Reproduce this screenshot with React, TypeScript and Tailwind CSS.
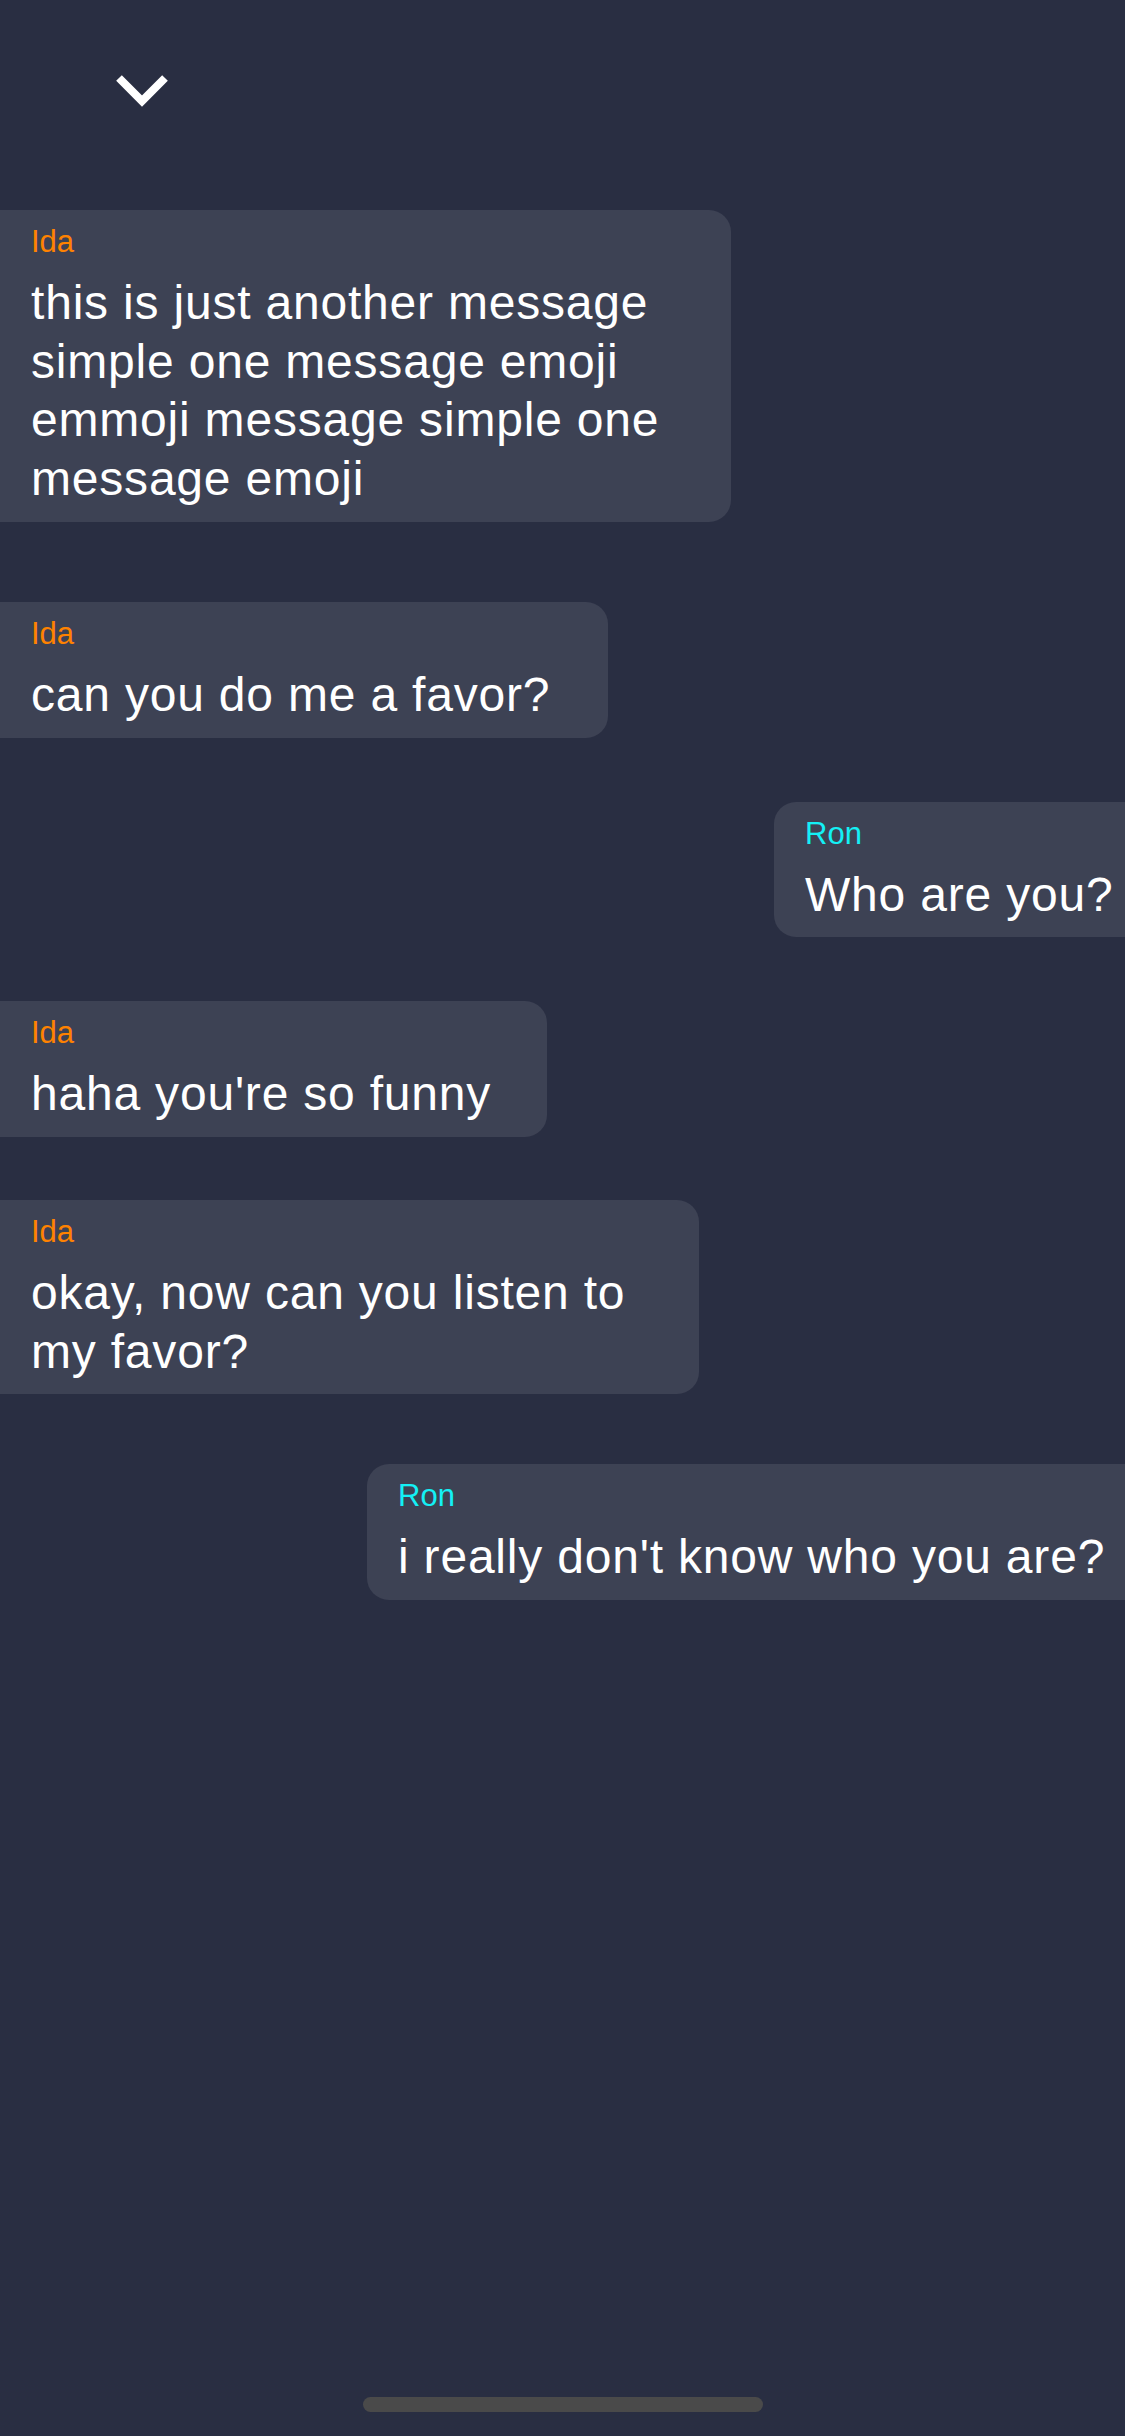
import type { ReactNode } from "react";

type Msg = {
  id: number;
  from: "Ida" | "Ron";
  text: string;
  // bubble width and top gap, read off the reference
  width: string;
  gap: string;
};

const messages: Msg[] = [
  {
    id: 1,
    from: "Ida",
    text: "this is just another message simple one message emoji emmoji message simple one message emoji",
    width: "w-[731px]",
    gap: "mt-[104px]",
  },
  { id: 2, from: "Ida", text: "can you do me a favor?", width: "w-[608px]", gap: "mt-[80px]" },
  { id: 3, from: "Ron", text: "Who are you?", width: "w-[351px]", gap: "mt-[64px]" },
  { id: 4, from: "Ida", text: "haha you're so funny", width: "w-[547px]", gap: "mt-[64px]" },
  { id: 5, from: "Ida", text: "okay, now can you listen to my favor?", width: "w-[699px]", gap: "mt-[63px]" },
  { id: 6, from: "Ron", text: "i really don't know who you are?", width: "w-[758px]", gap: "mt-[70px]" },
];

function Bubble({ msg }: { msg: Msg }) {
  const mine = msg.from === "Ron";
  return (
    <div className={`flex ${mine ? "justify-end" : "justify-start"} ${msg.gap}`}>
      <div
        className={`${msg.width} shrink-0 bg-[#3d4254] pt-[13px] pb-[13px] pl-[31px] ${
          mine ? "rounded-l-[22px] pr-0 whitespace-nowrap" : "rounded-r-[22px] pr-[55px]"
        }`}
      >
        <div
          className={`text-[31px] leading-[37px] ${mine ? "text-[#14f0f5]" : "text-[#ff8200]"}`}
        >
          {msg.from}
        </div>
        <p className="mt-[14px] text-[48px] leading-[58.7px] tracking-[0.8px] text-white">
          {msg.text}
        </p>
      </div>
    </div>
  );
}

function Screen({ children }: { children: ReactNode }) {
  return (
    <div
      className="relative flex h-[2436px] w-full flex-col overflow-hidden bg-[#292e42]"
      style={{ fontFamily: '"Liberation Sans", Arial, Helvetica, sans-serif' }}
    >
      {children}
    </div>
  );
}

export default function App() {
  return (
    <Screen>
      {/* top bar with the collapse chevron */}
      <div className="flex h-[106px] items-end pl-[114px]">
        <svg width="56" height="36" viewBox="0 0 56 36" fill="none" className="mb-[-2px]">
          <path
            d="M5 6 L28 29 L51 6"
            stroke="white"
            strokeWidth="8"
            strokeLinecap="butt"
            strokeLinejoin="miter"
          />
        </svg>
      </div>

      <div className="flex flex-col">
        {messages.map((m) => (
          <Bubble key={m.id} msg={m} />
        ))}
      </div>

      <div className="mt-auto flex justify-center pb-[24px]">
        <div className="h-[15px] w-[400px] rounded-full bg-[#4a4a4a]" />
      </div>
    </Screen>
  );
}
